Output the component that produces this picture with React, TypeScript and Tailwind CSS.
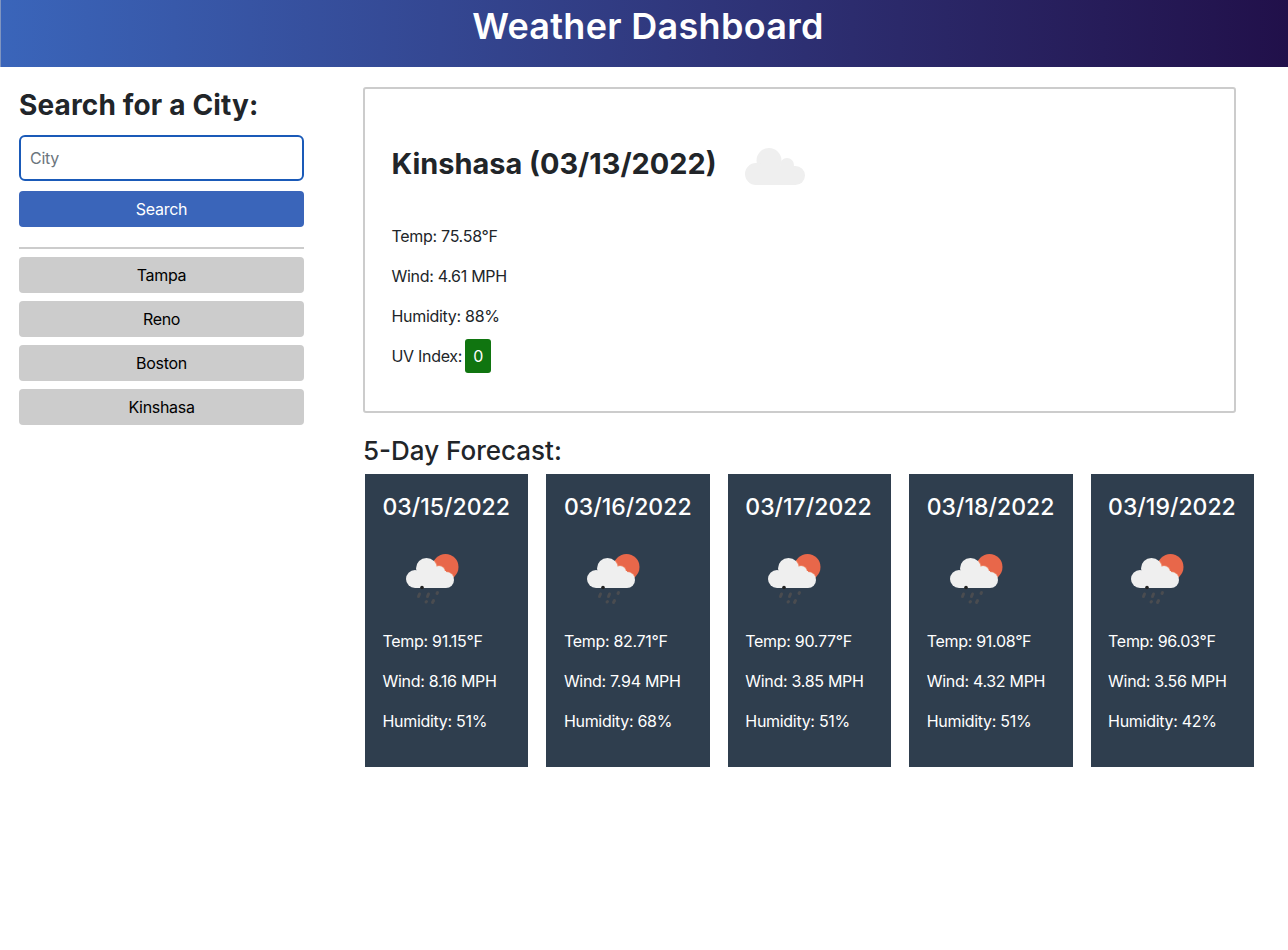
import React from 'react'

const cities = ["Tampa", "Reno", "Boston", "Kinshasa"]

const forecast = [
  { date: "03/15/2022", temp: "91.15", wind: "8.16", hum: "51" },
  { date: "03/16/2022", temp: "82.71", wind: "7.94", hum: "68" },
  { date: "03/17/2022", temp: "90.77", wind: "3.85", hum: "51" },
  { date: "03/18/2022", temp: "91.08", wind: "4.32", hum: "51" },
  { date: "03/19/2022", temp: "96.03", wind: "3.56", hum: "42" },
]

const BigCloud = () => (
  <svg width="60" height="38" viewBox="0 0 60 38" className="block" fill="#efefef">
    <circle cx="24" cy="12.500" r="12.500" />
    <circle cx="42" cy="17" r="7" />
    <circle cx="11" cy="26" r="11" />
    <circle cx="50.500" cy="27.500" r="9.500" />
    <rect x="11" y="18" width="39.500" height="19" />
  </svg>
)

const RainCloud = () => (
  <svg width="54" height="52" viewBox="0 0 54 52" className="block">
    <clipPath id="sun">
      <circle cx="39.500" cy="14" r="13" />
    </clipPath>
    <circle cx="39.500" cy="14" r="13" fill="#e8674a" />
    <g fill="#f08d6c" clipPath="url(#sun)">
      <circle cx="20.500" cy="15.500" r="11.200" />
      <circle cx="33" cy="19" r="6.700" />
      <circle cx="40" cy="27" r="8.700" />
    </g>
    <g fill="#efefef">
      <circle cx="20.500" cy="15.500" r="10.500" />
      <circle cx="33" cy="19" r="6" />
      <circle cx="9" cy="26" r="9" />
      <circle cx="40" cy="27" r="8" />
      <rect x="9" y="18" width="31" height="17" />
    </g>
    <circle cx="16" cy="34.500" r="1.800" fill="#222222" />
    <g stroke="#4a4c50" strokeWidth="3" strokeLinecap="round">
      <path d="M13.500 41 L12.500 43.500" />
      <path d="M22.500 41 L21.500 43.500" />
      <path d="M31.500 39.500 L31 40.500" />
      <path d="M20.500 48.500 L20 49" />
      <path d="M27.500 47.500 L26.500 49.500" />
    </g>
  </svg>
)

export default function App() {
  return (
    <div className="min-h-[950px] bg-white font-['Inter',sans-serif] text-[16px] leading-6 tracking-[-0.3px] text-[#212529]">
      <header className="h-[67px] border-l border-[#8095c0] bg-gradient-to-r from-[#3a65ba] to-[#21104a] pl-[7px] text-center">
        <h1 className="text-[36px] leading-[52px] font-semibold tracking-[0.3px] text-white">Weather Dashboard</h1>
      </header>

      <div className="flex">
        <aside className="ml-[19px] w-[285px] shrink-0 pt-[20px]">
          <h2 className="text-[28px] leading-[36px] font-bold tracking-[0.15px]">Search for a City:</h2>
          <input
            placeholder="City"
            className="mt-[12px] block h-[46px] w-full rounded-[6px] border-2 border-[#1a5ab8] px-[9px] text-[16px] placeholder:text-[#6c757d] outline-none"
          />
          <button className="mt-[10px] block h-[36px] w-full rounded-[4px] bg-[#3a65ba] text-white">Search</button>
          <hr className="mt-[20px] mb-[8px] border-t-2 border-[#cccccc]" />
          <div className="flex flex-col gap-2">
            {cities.map((city) => (
              <button key={city} className="h-[36px] w-full rounded-[4px] bg-[#cccccc] text-black">
                {city}
              </button>
            ))}
          </div>
        </aside>

        <main className="ml-[59px] flex-1 pt-[20px] pr-[34px]">
          <section className="h-[326px] w-[873px] rounded-[3px] border-2 border-[#cccccc] pr-[27px] pl-[26.500px] pt-[43px]">
            <div className="flex h-[64px] items-center">
              <h2 className="text-[28.900px] leading-[36px] font-bold tracking-normal whitespace-nowrap">Kinshasa (03/13/2022)</h2>
              <div className="ml-[28px] pt-[6px]"><BigCloud /></div>
            </div>
            <p className="mt-[28px]">Temp: 75.58°F</p>
            <p className="mt-[16px]">Wind: 4.61 MPH</p>
            <p className="mt-[16px]">Humidity: 88%</p>
            <p className="mt-[11px] flex items-center">
              UV Index:
              <span className="ml-[3px] flex h-[34px] w-[26px] items-center justify-center rounded-[3px] bg-[#107510] text-white">0</span>
            </p>
          </section>

          <h3 className="mt-[20px] text-[26px] leading-[36px] font-medium tracking-normal">5-Day Forecast:</h3>
          <div className="mt-[5px] ml-[2px] grid w-[889px] grid-cols-5 gap-[18px]">
            {forecast.map((day) => (
              <div key={day.date} className="h-[293px] bg-[#2f3e4e] px-[17.500px] pt-[16px] text-white">
                <h4 className="text-[23px] leading-[34px] font-medium tracking-normal whitespace-nowrap">{day.date}</h4>
                <div className="mt-[29px] ml-[23px]"><RainCloud /></div>
                <p className="mt-[24px]">Temp: {day.temp}°F</p>
                <p className="mt-[16px]">Wind: {day.wind} MPH</p>
                <p className="mt-[16px]">Humidity: {day.hum}%</p>
              </div>
            ))}
          </div>
        </main>
      </div>
    </div>
  )
}
